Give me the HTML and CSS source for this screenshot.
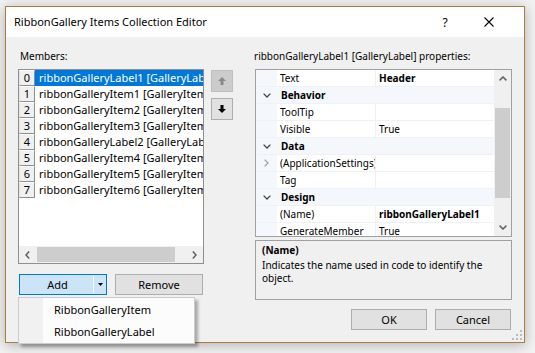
FILE: index.html
```html
<!DOCTYPE html>
<html>
<head>
<meta charset="utf-8">
<title>RibbonGallery Items Collection Editor</title>
<link rel="stylesheet" href="styles.css">
</head>
<body>
<div class="window">
  <div class="titlebar">
    <span class="title">RibbonGallery Items Collection Editor</span>
    <span class="help">?</span>
    <span class="close"><svg width="10" height="10" viewBox="0 0 10 10"><path d="M0.5 0.5 L9.5 9.5 M9.5 0.5 L0.5 9.5" stroke="#000" stroke-width="1.1" fill="none"/></svg></span>
  </div>
  <div class="content">
    <div class="left">
      <div class="label">Members:</div>
      <div class="list">
        <div class="rows">
          <div class="row sel"><span class="idx">0</span><span class="name">ribbonGalleryLabel1 [GalleryLabel]</span></div>
          <div class="row"><span class="idx">1</span><span class="name">ribbonGalleryItem1 [GalleryItem]</span></div>
          <div class="row"><span class="idx">2</span><span class="name">ribbonGalleryItem2 [GalleryItem]</span></div>
          <div class="row"><span class="idx">3</span><span class="name">ribbonGalleryItem3 [GalleryItem]</span></div>
          <div class="row"><span class="idx">4</span><span class="name">ribbonGalleryLabel2 [GalleryLabel]</span></div>
          <div class="row"><span class="idx">5</span><span class="name">ribbonGalleryItem4 [GalleryItem]</span></div>
          <div class="row"><span class="idx">6</span><span class="name">ribbonGalleryItem5 [GalleryItem]</span></div>
          <div class="row"><span class="idx">7</span><span class="name">ribbonGalleryItem6 [GalleryItem]</span></div>
        </div>
        <div class="hscroll">
          <span class="sbtn"><svg width="5" height="8" viewBox="0 0 5 8"><polyline points="4.2,0.5 1,4 4.2,7.5" stroke="#606060" stroke-width="1.5" fill="none"/></svg></span>
          <span class="htrack"><span class="hthumb"></span></span>
          <span class="sbtn"><svg width="5" height="8" viewBox="0 0 5 8"><polyline points="0.8,0.5 4,4 0.8,7.5" stroke="#606060" stroke-width="1.5" fill="none"/></svg></span>
        </div>
      </div>
      <div class="btnrow">
        <div class="split">
          <span class="split-main">Add</span>
          <span class="split-sep"></span>
          <span class="split-arrow"><svg width="5" height="3" viewBox="0 0 5 3"><polygon points="0,0 5,0 2.5,3" fill="#000"/></svg></span>
        </div>
        <div class="btn remove">Remove</div>
      </div>
    </div>
    <div class="arrows">
      <div class="abtn disabled"><svg width="8" height="8" viewBox="0 0 8 8"><path d="M4 0 L8 4 H5.5 V8 H2.5 V4 H0 Z" fill="#8a8a8a"/></svg></div>
      <div class="abtn"><svg width="8" height="8" viewBox="0 0 8 8"><path d="M4 8 L8 4 H5.5 V0 H2.5 V4 H0 Z" fill="#000"/></svg></div>
    </div>
    <div class="right">
      <div class="label plabel">ribbonGalleryLabel1 [GalleryLabel] properties:</div>
      <div class="grid">
        <div class="gbody">
          <div class="grow"><span class="gm"></span><span class="gn">Text</span><span class="gv b">Header</span></div>
          <div class="grow cat"><span class="gm"><svg width="8" height="5" viewBox="0 0 8 5"><polyline points="0.6,0.6 4,4 7.4,0.6" stroke="#444" stroke-width="1.3" fill="none"/></svg></span><span class="gc">Behavior</span></div>
          <div class="grow"><span class="gm"></span><span class="gn">ToolTip</span><span class="gv"></span></div>
          <div class="grow"><span class="gm"></span><span class="gn">Visible</span><span class="gv">True</span></div>
          <div class="grow cat"><span class="gm"><svg width="8" height="5" viewBox="0 0 8 5"><polyline points="0.6,0.6 4,4 7.4,0.6" stroke="#444" stroke-width="1.3" fill="none"/></svg></span><span class="gc">Data</span></div>
          <div class="grow"><span class="gm"><svg width="5" height="8" viewBox="0 0 5 8"><polyline points="0.6,0.6 4,4 0.6,7.4" stroke="#a0a0a0" stroke-width="1.3" fill="none"/></svg></span><span class="gn">(ApplicationSettings)</span><span class="gv"></span></div>
          <div class="grow"><span class="gm"></span><span class="gn">Tag</span><span class="gv"></span></div>
          <div class="grow cat"><span class="gm"><svg width="8" height="5" viewBox="0 0 8 5"><polyline points="0.6,0.6 4,4 7.4,0.6" stroke="#444" stroke-width="1.3" fill="none"/></svg></span><span class="gc">Design</span></div>
          <div class="grow"><span class="gm"></span><span class="gn">(Name)</span><span class="gv b">ribbonGalleryLabel1</span></div>
          <div class="grow"><span class="gm"></span><span class="gn">GenerateMember</span><span class="gv">True</span></div>
        </div>
        <div class="vscroll">
          <span class="vbtn"><svg width="8" height="5" viewBox="0 0 8 5"><polyline points="0.6,4.4 4,1 7.4,4.4" stroke="#606060" stroke-width="1.5" fill="none"/></svg></span>
          <span class="vtrack"><span class="vthumb"></span></span>
          <span class="vbtn"><svg width="8" height="5" viewBox="0 0 8 5"><polyline points="0.6,0.6 4,4 7.4,0.6" stroke="#606060" stroke-width="1.5" fill="none"/></svg></span>
        </div>
      </div>
      <div class="helpbox">
        <div class="htitle">(Name)</div>
        <div class="hdesc">Indicates the name used in code to identify the<br>object.</div>
      </div>
      <div class="okrow">
        <div class="btn dlg">OK</div>
        <div class="btn dlg">Cancel</div>
      </div>
    </div>
  </div>
  <div class="menu">
    <div class="mitem">RibbonGalleryItem</div>
    <div class="mitem">RibbonGalleryLabel</div>
  </div>
  <svg class="grip" width="10" height="10" viewBox="0 0 10 10"><g fill="#bcbcbc"><rect x="8" y="0" width="2" height="2"/><rect x="4" y="4" width="2" height="2"/><rect x="8" y="4" width="2" height="2"/><rect x="0" y="8" width="2" height="2"/><rect x="4" y="8" width="2" height="2"/><rect x="8" y="8" width="2" height="2"/></g></svg>
</div>
</body>
</html>
```

FILE: styles.css
```css
* { box-sizing: border-box; }
html, body { margin: 0; padding: 0; }
body {
  background: #f2f2f2;
  width: 535px;
  height: 353px;
  overflow: hidden;
  font-family: "Noto Sans", "Liberation Sans", Arial, sans-serif;
  font-size: 10px;
  color: #000;
}
.window {
  position: relative;
  margin: 6px 0 0 5px;
  width: 520px;
  height: 337px;
  border: 1px solid #b07a45;
  background: #f0f0f0;
  box-shadow: 0 2px 12px rgba(0,0,0,0.28);
}
.titlebar {
  height: 30px;
  background: #fff;
  display: flex;
  align-items: center;
  padding: 0 25px 0 8px;
}
.title { flex: 1; font-size: 11px; line-height: 14px; }
.help { width: 20px; text-align: center; font-size: 12px; margin-right: 24px; }
.close { width: 20px; height: 10px; display: flex; justify-content: center; }
.close svg { display: block; }

.content { display: flex; padding: 0 12px; }
.left { width: 186px; }
.arrows { width: 22px; margin-left: 7px; padding-top: 33px; display: flex; flex-direction: column; gap: 6px; }
.right { width: 257px; margin-left: 22px; }

.label { height: 32px; padding-top: 12px; line-height: 14px; margin-left: 2px; white-space: nowrap; }
.plabel { margin-left: -1px; }

.list {
  height: 195px;
  border: 1px solid #8f8f8f;
  background: #fff;
  display: flex;
  flex-direction: column;
}
.rows { flex: 1; overflow: hidden; }
.row { display: flex; height: 16px; }
.idx {
  width: 16px;
  height: 16px;
  flex: none;
  background: #f0f0f0;
  border: 1px solid;
  border-color: #fff #8e8e8e #8e8e8e #e3e3e3;
  text-align: center;
  line-height: 14px;
  font-size: 11px;
}
.name {
  flex: 1;
  padding-left: 4px;
  white-space: nowrap;
  overflow: hidden;
  line-height: 16px;
  font-size: 11px;
}
.row.sel .name { background: #0078d7; color: #fff; }
.hscroll { height: 17px; display: flex; background: #f0f0f0; }
.sbtn { width: 17px; display: flex; align-items: center; justify-content: center; }
.sbtn svg, .vbtn svg { display: block; }
.htrack { flex: 1; padding: 1px 0 1px 1px; }
.hthumb { display: block; width: 138px; height: 100%; background: #cdcdcd; }

.btnrow { display: flex; margin-top: 10px; padding-left: 1px; gap: 8px; }
.btn {
  height: 21px;
  background: #e1e1e1;
  border: 1px solid #adadad;
  display: flex;
  align-items: center;
  justify-content: center;
  font-size: 11px;
}
.remove { width: 88px; }
.split {
  width: 88px;
  height: 21px;
  background: #cce4f7;
  border: 1px solid #0078d7;
  display: flex;
  align-items: center;
  font-size: 11px;
}
.split-main { flex: 1; text-align: center; padding-left: 2px; }
.split-sep { width: 1px; height: 17px; background: #f4f9fd; }
.split-arrow { width: 12px; display: flex; justify-content: center; }
.split-arrow svg { display: block; }

.abtn {
  height: 22px;
  background: #e1e1e1;
  border: 1px solid #adadad;
  display: flex;
  align-items: center;
  justify-content: center;
}
.abtn.disabled { background: #cccccc; border-color: #bfbfbf; }
.abtn svg { display: block; }

.grid {
  height: 168px;
  border: 1px solid #a0a0a0;
  background: #fff;
  display: flex;
}
.gbody { flex: 1; overflow: hidden; }
.grow { display: flex; height: 17px; border-bottom: 1px solid #eef1f6; }
.gm {
  width: 21px;
  flex: none;
  background: #f4f7fc;
  display: flex;
  align-items: center;
  justify-content: center;
}
.gm svg { display: block; }
.gn {
  width: 98px;
  flex: none;
  padding-left: 3px;
  line-height: 16px;
  white-space: nowrap;
  overflow: hidden;
}
.gv {
  flex: 1;
  border-left: 1px solid #eef1f6;
  padding-left: 3px;
  line-height: 16px;
  white-space: nowrap;
  overflow: hidden;
}
.b { font-weight: bold; }
.grow.cat { background: #f4f7fc; }
.gc { font-weight: bold; padding-left: 4px; line-height: 16px; }
.vscroll { width: 17px; flex: none; background: #f0f0f0; display: flex; flex-direction: column; }
.vbtn { height: 17px; display: flex; align-items: center; justify-content: center; }
.vtrack { flex: 1; padding: 21px 1px 0 1px; }
.vthumb { display: block; height: 90px; background: #cdcdcd; }

.helpbox {
  margin-top: 3px;
  height: 60px;
  border: 1px solid #a0a0a0;
  padding: 2px 6px;
}
.htitle { font-weight: bold; line-height: 14px; }
.hdesc { margin-top: 2px; line-height: 13px; }

.okrow { display: flex; justify-content: flex-end; gap: 8px; margin-top: 9px; padding-right: 1px; }
.dlg { width: 76px; }

.menu {
  position: absolute;
  left: 12px;
  top: 290px;
  width: 177px;
  height: 47px;
  border: 1px solid #cccccc;
  background: linear-gradient(to right, #f1f1f1 0, #f1f1f1 24px, #fcfcfc 24px);
  padding-top: 1px;
  box-shadow: 3px 3px 3px rgba(0,0,0,0.3);
}
.mitem { height: 22px; line-height: 22px; padding-left: 35px; font-size: 11px; }
.grip { position: absolute; right: 2px; bottom: 2px; display: block; }
```
